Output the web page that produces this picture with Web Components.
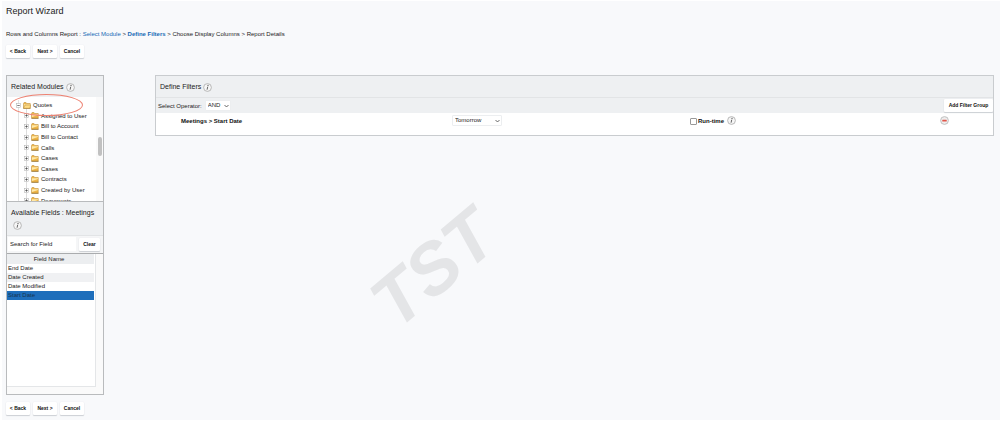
<!DOCTYPE html>
<html lang="en">
<head>
<meta charset="utf-8">
<title>Report Wizard</title>
<style>
  body {
    margin: 0;
    background: #fff;
    color: #222;
    font: 6px/8px "Liberation Sans", Arial, sans-serif;
  }
</style>
</head>
<body>
<report-wizard></report-wizard>

<script>
"use strict";

class WizardElement extends HTMLElement {
  constructor() {
    super();
    this._root = this.attachShadow({ mode: "open" });
    this._root.innerHTML = `<style>* { box-sizing: border-box; } ${this._style}</style>${this._template}`;
  }

  get _style() {
    return "";
  }

  get _template() {
    return "<slot></slot>";
  }
}

// info-icon
class InfoIcon extends WizardElement {
  get _style() {
    return /*css*/ `
      :host { display: inline-block; width: 9px; height: 9px; flex: none; }
      svg { display: block; width: 100%; height: 100%; }
    `;
  }

  get _template() {
    return /*html*/ `
      <svg viewBox="0 0 18 18" role="img" aria-label="Info">
        <circle cx="9" cy="9" r="7.8" fill="#f6f6f6" stroke="#aaa" stroke-width="1.6"/>
        <circle cx="10" cy="5" r="1.3" fill="#666"/>
        <path d="M9.4 7.6L8.2 13.4" fill="none" stroke="#666" stroke-width="2"/>
      </svg>
    `;
  }
}

// wizard-button
class WizardButton extends WizardElement {
  get _style() {
    return /*css*/ `
      :host { display: inline-flex; flex: none; }
      button {
        width: 100%;
        height: 13px;
        padding: 0 3px;
        border: 0;
        border-radius: 1px;
        background: #fff;
        box-shadow: 0 1px 1px #ccd0d4, 0 0 1px #dde0e3;
        color: #111;
        font: bold 5px/13px "Liberation Sans", Arial, sans-serif;
        white-space: nowrap;
      }
    `;
  }

  get _template() {
    return /*html*/ `<button type="button"><slot></slot></button>`;
  }
}

// wizard-nav
class WizardNav extends WizardElement {
  get _style() {
    return /*css*/ `
      :host { display: flex; gap: 3px; }
      wizard-button { min-width: 24px; }
    `;
  }

  get _template() {
    return /*html*/ `
      <wizard-button>&lt; Back</wizard-button>
      <wizard-button>Next &gt;</wizard-button>
      <wizard-button>Cancel</wizard-button>
    `;
  }
}

// panel-head
class PanelHead extends WizardElement {
  get _style() {
    return /*css*/ `
      :host { display: block; padding: 6px 4px 5px; background: #eef0f2; }
      h2 {
        display: flex;
        flex-wrap: wrap;
        align-items: center;
        row-gap: 3px;
        margin: 0;
        font-size: 7px;
        font-weight: normal;
        line-height: 10px;
      }
      info-icon { margin-left: 2px; }
    `;
  }

  get _template() {
    return /*html*/ `<h2><slot></slot><info-icon></info-icon></h2>`;
  }
}

// tree-item
class TreeItem extends WizardElement {
  get _style() {
    return /*css*/ `
      :host { display: flex; align-items: center; gap: 2px; padding-left: 17px; white-space: nowrap; font-size: 6px; }
      :host([open]) { padding-left: 9px; }
      .toggle { width: 5px; height: 5px; flex: none; }
      .folder { width: 8px; height: 7px; flex: none; }
      .minus, .opened { display: none; }
      :host([open]) .plus { display: none; }
      :host([open]) .minus, :host([open]) .opened { display: inline; }
    `;
  }

  get _template() {
    return /*html*/ `
      <svg class="toggle" viewBox="0 0 10 10">
        <rect x="1" y="1" width="8" height="8" fill="#fff" stroke="#aaa"/>
        <path class="plus" d="M2.5 5H7.5M5 2.5V7.5" stroke="#444" stroke-width="1.4"/>
        <path class="minus" d="M2.5 5H7.5" stroke="#444" stroke-width="1.4"/>
      </svg>
      <svg class="folder" viewBox="0 0 16 14">
        <path d="M1 3L2 1H6L7.5 3H14.5V12.5H1Z" fill="#efb546" stroke="#b98a3a"/>
        <path d="M2 4.5H14V6L2 10Z" fill="#ffe9a8"/>
        <path d="M1 12.7H15" stroke="#7a5a22" stroke-width="1.2"/>
        <path class="opened" d="M4 6H15.5L13.5 12.5H1Z" fill="#ffdc82" stroke="#b98a3a"/>
      </svg>
      <span><slot></slot></span>
    `;
  }
}

// module-tree
class ModuleTree extends WizardElement {
  get _style() {
    return /*css*/ `
      :host {
        display: grid;
        grid-template-columns: 1fr 7px;
        height: 104px;
        overflow: hidden;
        background: #fff;
      }
      .items {
        display: grid;
        grid-auto-rows: 1fr;
        height: 106px;
        margin-top: 3px;
        background: linear-gradient(#ddd, #ddd) 19px 6px / 1px 100% no-repeat,
          linear-gradient(#e3e3e3, #e3e3e3) 11px 0 / 1px 100% no-repeat;
      }
      .track { padding: 40px 1px 0 2px; background: #fafafa; }
      .thumb { height: 19px; border-radius: 2px; background: #c1c1c1; }
    `;
  }

  get _template() {
    return /*html*/ `
      <div class="items"><slot></slot></div>
      <div class="track"><div class="thumb"></div></div>
    `;
  }
}

// available-fields
class AvailableFields extends WizardElement {
  get _style() {
    return /*css*/ `
      :host { display: block; border-top: 1px solid #b9bbbd; }
      panel-head { border-bottom: 1px solid #e2e4e6; }
      .search {
        display: flex;
        align-items: center;
        gap: 3px;
        padding: 1px 3px 2px 1px;
        background: #f5f6f7;
        border-bottom: 1px solid #aaacae;
      }
      input {
        flex: 1;
        min-width: 0;
        height: 14px;
        padding: 0 2px;
        border: 0;
        background: #fff;
        color: #222;
        font: 6px/14px "Liberation Sans", Arial, sans-serif;
      }
      input::placeholder { color: #222; opacity: 1; }
      wizard-button { min-width: 21px; }
      .list { padding: 0 7px 7px 0; background: #fafafa; }
      .scroll {
        height: 133px;
        padding-right: 1px;
        background: #fff;
        border-right: 1px solid #e4e6e8;
        border-bottom: 1px solid #e4e6e8;
      }
      table { width: 100%; border-collapse: collapse; }
      th, td { height: 9px; padding: 0 1px; text-align: left; font-weight: normal; line-height: 9px; }
      th { height: 10px; padding-right: 4px; background: #eceef0; text-align: center; line-height: 10px; }
      tr:nth-child(even) td { background: #f0f1f3; }
      tr.selected td { background: #1e6ebb; color: #173450; }
    `;
  }

  get _template() {
    return /*html*/ `
      <panel-head>Available Fields : Meetings</panel-head>
      <div class="search">
        <input type="text" placeholder="Search for Field" aria-label="Search for Field">
        <wizard-button>Clear</wizard-button>
      </div>
      <div class="list">
        <div class="scroll">
          <table>
            <thead><tr><th>Field Name</th></tr></thead>
            <tbody>
              <tr><td>End Date</td></tr>
              <tr><td>Date Created</td></tr>
              <tr><td>Date Modified</td></tr>
              <tr class="selected"><td>Start Date</td></tr>
            </tbody>
          </table>
        </div>
      </div>
    `;
  }
}

// select-field
class SelectField extends WizardElement {
  get _style() {
    return /*css*/ `
      :host { display: flex; align-items: center; gap: 3px; }
      .box { display: grid; align-items: center; width: var(--select-width, 26px); }
      select, svg { grid-area: 1 / 1; }
      select {
        appearance: none;
        width: 100%;
        height: 11px;
        padding: 0 2px;
        border: 1px solid #eceef0;
        border-radius: 1px;
        background: #fff;
        color: #222;
        font: 6px/9px "Liberation Sans", Arial, sans-serif;
      }
      svg { justify-self: end; width: 5px; height: 4px; margin-right: 2px; pointer-events: none; }
    `;
  }

  get _template() {
    const label = this.getAttribute("label");
    const value = this.getAttribute("value");
    const hidden = this.hasAttribute("hide-label");
    return /*html*/ `
      ${hidden ? "" : `<label for="select">${label}:</label>`}
      <div class="box">
        <select id="select" aria-label="${label}"><option>${value}</option></select>
        <svg viewBox="0 0 10 8"><path d="M1 2L5 6L9 2" fill="none" stroke="#444" stroke-width="1.6"/></svg>
      </div>
    `;
  }
}

// filter-row
class FilterRow extends WizardElement {
  get _style() {
    return /*css*/ `
      :host {
        display: grid;
        grid-template-columns: 271fr 238fr 250fr 53fr;
        align-items: center;
        padding: 2px 0 9px 25px;
        background: #fff;
        font-weight: bold;
        color: #111;
      }
      .name { white-space: nowrap; }
      select-field { --select-width: 50px; }
      .runtime { display: flex; align-items: center; }
      .runtime input {
        appearance: none;
        width: 7px;
        height: 7px;
        margin: 2px 1px 0 0;
        border: 1px solid #999;
        border-radius: 1px;
        background: #fff;
      }
      .runtime info-icon { margin-left: 3px; }
      .remove { width: 9px; height: 9px; padding: 0; border: 0; background: none; }
      .remove svg { display: block; width: 9px; height: 9px; }
    `;
  }

  get _template() {
    return /*html*/ `
      <span class="name"><slot></slot></span>
      <select-field label="Date" value="Tomorrow" hide-label></select-field>
      <div class="runtime">
        <input type="checkbox" id="runtime"><label for="runtime">Run-time</label>
        <info-icon></info-icon>
      </div>
      <button class="remove" type="button" aria-label="Remove filter">
        <svg viewBox="0 0 18 18">
          <circle cx="9" cy="9" r="7.8" fill="#eee" stroke="#bbb" stroke-width="1.8"/>
          <rect x="4.5" y="7.5" width="9" height="3.4" rx="1" fill="#e2564a"/>
        </svg>
      </button>
    `;
  }
}

// filter-panel
class FilterPanel extends WizardElement {
  get _style() {
    return /*css*/ `
      :host { display: block; border: 1px solid #c9cccf; }
      .operator {
        display: flex;
        align-items: center;
        justify-content: space-between;
        padding: 1px 0 1px 2px;
        border-top: 1px solid #e2e4e6;
        background: #eef0f2;
      }
      .operator wizard-button { min-width: 49px; }
    `;
  }

  get _template() {
    return /*html*/ `
      <panel-head>Define Filters</panel-head>
      <div class="operator">
        <select-field label="Select Operator" value="AND"></select-field>
        <wizard-button>Add Filter Group</wizard-button>
      </div>
      <slot></slot>
    `;
  }
}

// report-wizard
class ReportWizard extends WizardElement {
  get _style() {
    return /*css*/ `
      :host {
        display: block;
        position: relative;
        margin: 1px 0 0 2px;
        padding: 5px 6px 5px 4px;
        background: #f8f9fb;
      }
      h1 { margin: 0 0 13px; font-size: 9px; line-height: 11px; font-weight: normal; }
      .steps { margin-bottom: 7px; line-height: 8px; }
      .steps a { color: #1769b5; text-decoration: none; }
      .columns {
        display: grid;
        grid-template-columns: 98px 1fr;
        gap: 51px;
        align-items: start;
        margin: 17px 0 7px;
      }
      .side { position: relative; border: 1px solid #b9bbbd; }
      .marker {
        position: absolute;
        top: 18px;
        left: 3px;
        width: 73px;
        height: 22px;
        border: 1px solid #ed8272;
        border-radius: 50%;
        pointer-events: none;
      }
      .stamp {
        position: absolute;
        left: 431px;
        top: 267px;
        transform: translate(-50%, -50%) rotate(-40deg);
        color: #e4e5e7;
        font: italic bold 72px/72px "Liberation Sans", Arial, sans-serif;
        pointer-events: none;
      }
    `;
  }

  get _template() {
    return /*html*/ `
      <h1>Report Wizard</h1>
      <div class="steps">
        Rows and Columns Report : <a href="#module">Select Module</a> &gt;
        <a href="#filters"><b>Define Filters</b></a> &gt; Choose Display Columns &gt; Report Details
      </div>
      <wizard-nav></wizard-nav>
      <div class="columns">
        <div class="side">
          <panel-head>Related Modules</panel-head>
          <module-tree>
            <tree-item open>Quotes</tree-item>
            <tree-item>Assigned to User</tree-item>
            <tree-item>Bill to Account</tree-item>
            <tree-item>Bill to Contact</tree-item>
            <tree-item>Calls</tree-item>
            <tree-item>Cases</tree-item>
            <tree-item>Cases</tree-item>
            <tree-item>Contracts</tree-item>
            <tree-item>Created by User</tree-item>
            <tree-item>Documents</tree-item>
          </module-tree>
          <available-fields></available-fields>
          <div class="marker"></div>
        </div>
        <filter-panel>
          <filter-row>Meetings &gt; Start Date</filter-row>
        </filter-panel>
      </div>
      <wizard-nav></wizard-nav>
      <div class="stamp">TST</div>
    `;
  }
}

customElements.define("info-icon", InfoIcon);
customElements.define("wizard-button", WizardButton);
customElements.define("wizard-nav", WizardNav);
customElements.define("panel-head", PanelHead);
customElements.define("tree-item", TreeItem);
customElements.define("module-tree", ModuleTree);
customElements.define("available-fields", AvailableFields);
customElements.define("select-field", SelectField);
customElements.define("filter-row", FilterRow);
customElements.define("filter-panel", FilterPanel);
customElements.define("report-wizard", ReportWizard);
</script>
</body>
</html>
